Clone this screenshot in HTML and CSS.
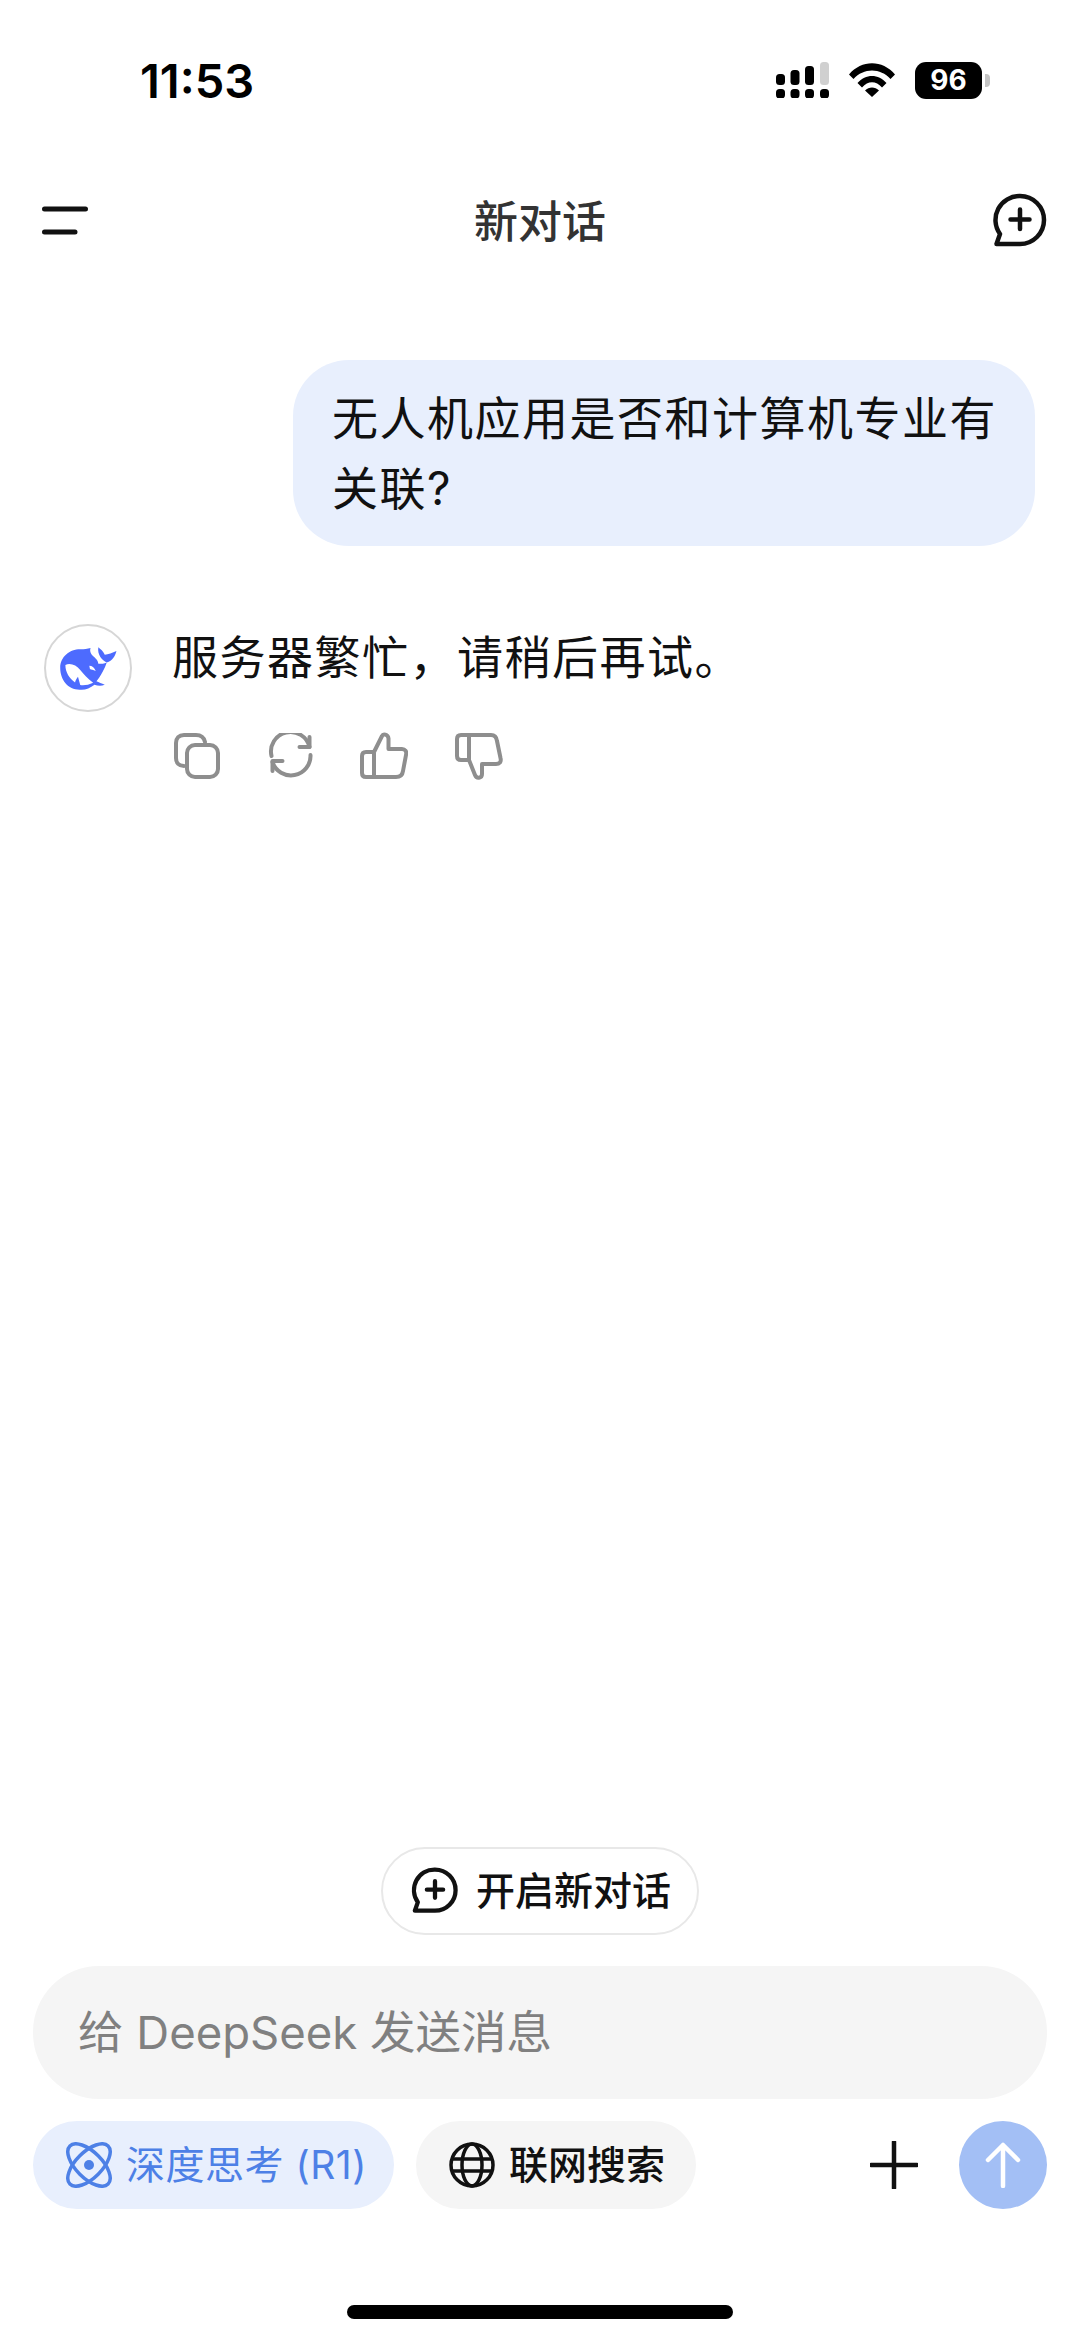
FILE: index.html
```html
<!DOCTYPE html>
<html lang="zh-CN">
<head>
    <meta charset="UTF-8">
    <meta name="viewport" content="width=device-width, initial-scale=1.0">
    <title>新对话</title>
    <link rel="stylesheet" href="styles.css">
</head>
<body>
    <div id="content">
        <div class="status">
            <span class="time">11:53</span>
            <div class="status-icons">
                <svg class="signal" width="53" height="36" viewBox="0 0 53 36">
                    <rect x="0" y="12" width="9" height="11" rx="3.5"/>
                    <rect x="14.5" y="8" width="9" height="15" rx="3.5"/>
                    <rect x="29" y="4" width="9" height="19" rx="3.5"/>
                    <rect x="44" y="0" width="9" height="23" rx="3.5" fill="#d0d0d0"/>
                    <rect x="0" y="27" width="9" height="9.5" rx="3.5"/>
                    <rect x="14.5" y="27" width="9" height="9.5" rx="3.5"/>
                    <rect x="29" y="27" width="9" height="9.5" rx="3.5"/>
                    <rect x="44" y="27" width="9" height="9.5" rx="3.5"/>
                </svg>
                <svg class="wifi" width="46" height="34" viewBox="0 0 46 34">
                    <path d="M0 11.500C12.500 -3.500 33.500 -3.500 46 11.500L41.500 16C31.500 4.500 14.500 4.500 4.500 16Z"/>
                    <path d="M8.500 20C16.500 10.500 29.500 10.500 37.500 20L33 24.500C27 17.500 19 17.500 13 24.500Z"/>
                    <path d="M16 27.500C20 23.500 26 23.500 30 27.500L23 34Z"/>
                </svg>
                <div class="battery">
                    <span class="battery-level">96</span>
                    <span class="battery-nub"></span>
                </div>
            </div>
        </div>

        <header class="nav">
            <button class="nav-btn" aria-label="菜单">
                <svg width="46" height="30" viewBox="0 0 46 30"><path d="M2.500 3H43.500M2.500 26H33" fill="none" stroke="#111" stroke-width="5" stroke-linecap="round"/></svg>
            </button>
            <h1>新对话</h1>
            <button class="nav-btn" aria-label="新对话">
                <svg width="56" height="56" viewBox="0 0 56 56"><path d="M28 3a24 24 0 0 1 0 48H4.500L8 41A24 24 0 0 1 28 3Z" fill="none" stroke="#111" stroke-width="4.500" stroke-linejoin="round"/><path d="M28 16.500V36M18.500 26.500H37.500" fill="none" stroke="#111" stroke-width="4.500" stroke-linecap="round"/></svg>
            </button>
        </header>

        <main class="chat">
            <div class="bubble">无人机应用是否和计算机专业有关联?</div>
            <div class="reply">
                <div class="avatar">
                    <svg width="84" height="84" viewBox="44 29 260 260">
                        <path fill="#4d6bfe" d="M88 158C88 124 118 100 152 101C162 101 172 100 182 97C178 108 184 118 194 126C200 132 205 137 206 146C216 146 224 146 232 142C226 160 214 184 200 200C208 204 216 206 226 211C214 216 204 214 194 211C180 222 164 228 148 226C112 226 88 195 88 158Z"/>
                        <path fill="#4d6bfe" d="M206 95C212 100 222 108 226 118C236 116 250 112 262 106C258 122 250 136 232 142C218 136 202 118 206 95Z"/>
                        <path fill="#fff" d="M104 150C118 142 138 150 150 165C160 178 172 190 190 205C176 212 160 214 150 212L143 186C138 192 135 198 134 204C116 192 104 172 104 150Z"/>
                        <path fill="#fff" d="M178 152C186 152 194 158 198 168C190 164 184 164 180 162Z"/>
                    </svg>
                </div>
                <div class="reply-body">
                    <p class="reply-text">服务器繁忙，请稍后再试。</p>
                    <div class="actions">
                        <svg width="46" height="46" viewBox="0 0 46 46" class="act"><path d="M10 33C5 33 2 30 2 25V10C2 5 5 2 10 2H22C27 2 30 4.500 31 9"/><rect x="13" y="12" width="31" height="32" rx="8"/></svg>
                        <svg width="46" height="46" viewBox="-1.500 0 46 46" class="act"><path d="M3 23A19.500 19.500 0 0 1 41 14"/><path d="M42 22A19.500 19.500 0 0 1 4 29"/><path d="M41 4V14H31"/><path d="M4 38V28H14"/></svg>
                        <svg width="48" height="48" viewBox="0 0 48 48" class="act"><path d="M14 20L22 4C23 1.500 28 2 28.500 6.500V17H42C45 17 47 19.500 46 23L43 39C42.500 43 40 45 36 45H6C3.500 45 2 43.500 2 41V24C2 21.500 3.500 20 6 20H14V45"/></svg>
                        <svg width="48" height="48" viewBox="0 0 48 48" class="act"><path d="M34 28L28 43C26.500 47 21 46.500 21 42V32H7C3.500 32 1.500 30 2.500 26L6 9C6.500 5 9 3 12 3H42C44.500 3 46 4.500 46 7V24C46 26.500 44.500 28 42 28H34V3" transform="matrix(-1 0 0 1 48 0)"/></svg>
                    </div>
                </div>
            </div>
        </main>

        <div class="composer">
            <button class="new-chat">
                <svg width="48" height="48" viewBox="0 0 56 56"><path d="M28 3a24 24 0 0 1 0 48H4.500L8 41A24 24 0 0 1 28 3Z" fill="none" stroke="#111" stroke-width="5" stroke-linejoin="round"/><path d="M28 16.500V36M18.500 26.500H37.500" fill="none" stroke="#111" stroke-width="5" stroke-linecap="round"/></svg>
                <span class="label">开启新对话</span>
            </button>
            <div class="input">给 DeepSeek 发送消息</div>
            <div class="tools">
                <button class="tool tool-on">
                    <svg width="46" height="46" viewBox="0 0 46 46"><g fill="none" stroke="#4d80e6" stroke-width="3.500"><ellipse cx="23" cy="23" rx="13" ry="27" transform="rotate(-45 23 23)"/><ellipse cx="23" cy="23" rx="13" ry="27" transform="rotate(45 23 23)"/></g><circle cx="23" cy="23" r="5" fill="#4d80e6"/></svg>
                    <span class="label">深度思考 (R1)</span>
                </button>
                <button class="tool">
                    <svg width="46" height="46" viewBox="0 0 46 46"><g fill="none" stroke="#111" stroke-width="3.500"><circle cx="23" cy="23" r="21"/><ellipse cx="23" cy="23" rx="10" ry="21"/><path d="M3 17H43M3 29H43"/></g></svg>
                    <span class="label">联网搜索</span>
                </button>
                <div class="spacer"></div>
                <svg class="plus" width="48" height="48" viewBox="0 0 48 48"><path d="M24 1V47M1 24H47" fill="none" stroke="#111" stroke-width="4.500" stroke-linecap="round"/></svg>
                <button class="send" aria-label="发送">
                    <svg width="36" height="46" viewBox="0 0 36 46"><path d="M18 44V3M3 18L18 3L33 18" fill="none" stroke="#fff" stroke-width="4.500" stroke-linecap="round" stroke-linejoin="round"/></svg>
                </button>
            </div>
        </div>
        <div class="home-bar"></div>
    </div>
</body>
</html>
```

FILE: styles.css
```css
*{
    margin: 0;
    box-sizing: border-box;
}
:root{
    --azul:#4d80e6;
    --azul-claro:#e8effd;
    --cinza:#f5f5f5;
    --preto:#111;
}
html, body{
    background-color: white;
    height: 100%;
}
body{
    font-family: Inter, "Noto Sans CJK SC", sans-serif;
    color: var(--preto);
    overflow: hidden;
}
button{
    font: inherit;
    color: inherit;
    border: none;
    background: none;
    padding: 0;
}
#content{
    display: flex;
    flex-direction: column;
    width: 1080px;
    height: 2341px;
}

/* barra de status */
.status{
    display: flex;
    justify-content: space-between;
    align-items: center;
    height: 160px;
    padding: 0 90px 0 140px;
}
.time{
    font-size: 47px;
    font-weight: 600;
    color: #000;
}
.status-icons{
    display: flex;
    align-items: center;
    gap: 20px;
}
.signal, .wifi{
    fill: #000;
}
.battery{
    display: flex;
    align-items: center;
    gap: 3px;
}
.battery-level{
    display: grid;
    place-items: center;
    width: 67px;
    height: 37px;
    background-color: #000;
    border-radius: 11px;
    color: white;
    font-size: 28px;
    font-weight: 700;
}
.battery-nub{
    width: 5px;
    height: 13px;
    background-color: #c4c4c4;
    border-radius: 0 4px 4px 0;
}

/* navegacao */
.nav{
    display: flex;
    justify-content: space-between;
    align-items: center;
    height: 122px;
    padding: 0 32px 0 42px;
}
.nav h1{
    padding-bottom: 5px;
    font-size: 44px;
    font-weight: 500;
    color: #333;
}
.nav-btn{
    display: flex;
}

/* conversa */
.chat{
    flex: 1;
    padding: 78px 45px 0 44px;
}
.bubble{
    width: 742px;
    margin-left: auto;
    padding: 23px 20px 23px 39px;
    background-color: var(--azul-claro);
    border-radius: 56px;
    font-size: 46px;
    line-height: 70px;
    letter-spacing: 1.500px;
}
.reply{
    display: flex;
    gap: 40px;
    margin-top: 78px;
}
.avatar{
    display: grid;
    place-items: center;
    flex: none;
    width: 88px;
    height: 88px;
    border: 2px solid #d6d6d6;
    border-radius: 50%;
}
.reply-text{
    margin-top: -2px;
    font-size: 46px;
    line-height: 70px;
    letter-spacing: 1.500px;
    color: #111;
}
.actions{
    display: flex;
    align-items: center;
    gap: 47px;
    margin: 40px 0 0 2px;
}
.act{
    fill: none;
    stroke: #8e8e8e;
    stroke-width: 4;
    stroke-linecap: round;
    stroke-linejoin: round;
}

/* area de digitacao */
.composer{
    display: flex;
    flex-direction: column;
    padding: 0 33px;
}
.label{
    padding-bottom: 6px;
}
.new-chat{
    display: flex;
    align-items: center;
    gap: 17px;
    align-self: center;
    height: 88px;
    padding: 0 26px 0 28px;
    background-color: white;
    border: 2px solid #e8e8e8;
    border-radius: 44px;
    font-size: 39px;
    font-weight: 500;
}
.input{
    display: flex;
    align-items: center;
    height: 133px;
    margin-top: 31px;
    padding: 0 0 8px 45px;
    background-color: var(--cinza);
    border-radius: 66px;
    font-size: 45.500px;
    color: #808080;
}
.tools{
    display: flex;
    align-items: center;
    gap: 22px;
    margin-top: 22px;
}
.tool{
    display: flex;
    align-items: center;
    gap: 14px;
    height: 88px;
    padding: 0 31px 0 33px;
    background-color: var(--cinza);
    border-radius: 44px;
    font-size: 39px;
    font-weight: 500;
}
.tool-on{
    padding-right: 27px;
    background-color: var(--azul-claro);
    color: var(--azul);
    font-weight: 400;
    letter-spacing: .500px;
}
.spacer{
    flex: 1;
}
.plus{
    margin-right: 19px;
}
.send{
    display: grid;
    place-items: center;
    width: 88px;
    height: 88px;
    background-color: #a3bff5;
    border-radius: 50%;
}
.home-bar{
    align-self: center;
    width: 386px;
    height: 14px;
    margin: 96px 0 22px;
    background-color: #000;
    border-radius: 7px;
}
```
